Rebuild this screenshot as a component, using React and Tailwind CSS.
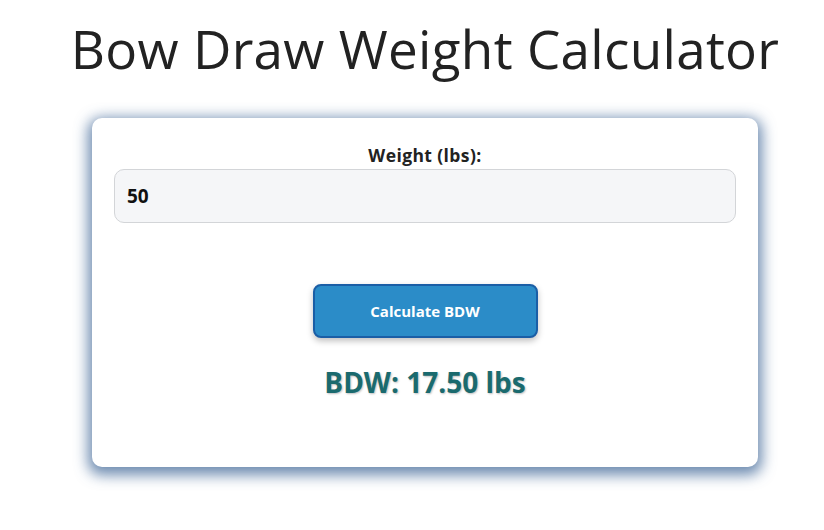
export default function App() {
  return (
    <div className="w-[824px] h-[530px] bg-white overflow-hidden" style={{ fontFamily: '"Open Sans", "Noto Sans", sans-serif' }}>
      <h1 className="text-center text-[53px] leading-none text-[#222] pt-[22px] pl-[26px] tracking-[0.3px]" style={{ fontFamily: '"Open Sans", sans-serif' }}>
        Bow Draw Weight Calculator
      </h1>
      <div className="mt-[43px] ml-[92px] w-[666px] h-[349px] bg-white rounded-[10px] shadow-[0_4px_14px_4px_rgba(60,100,150,0.75)] px-[22px] pt-[26px] flex flex-col items-center">
        <label className="text-[17.5px] font-bold text-[#222] leading-[22px] tracking-[0.4px]">Weight (lbs):</label>
        <div className="mt-[3px] w-full h-[54px] bg-[#f5f6f8] border border-[#d3d5d8] rounded-[10px] flex items-center px-[12px]">
          <span className="text-[19px] font-bold text-[#111]">50</span>
        </div>
        <button className="mt-[61px] w-[225px] h-[54px] bg-[#2b8cc8] border-2 border-[#1a5ea6] rounded-[8px] text-white text-[15px] font-bold shadow-[0_3px_6px_rgba(0,0,0,0.25)]">
          Calculate BDW
        </button>
        <div className="mt-[26px] text-[28px] font-bold text-[#1a6a6e] leading-[36px]" style={{ textShadow: '1px 1px 2px rgba(0,0,0,0.25)' }}>
          BDW: 17.50 lbs
        </div>
      </div>
    </div>
  );
}
